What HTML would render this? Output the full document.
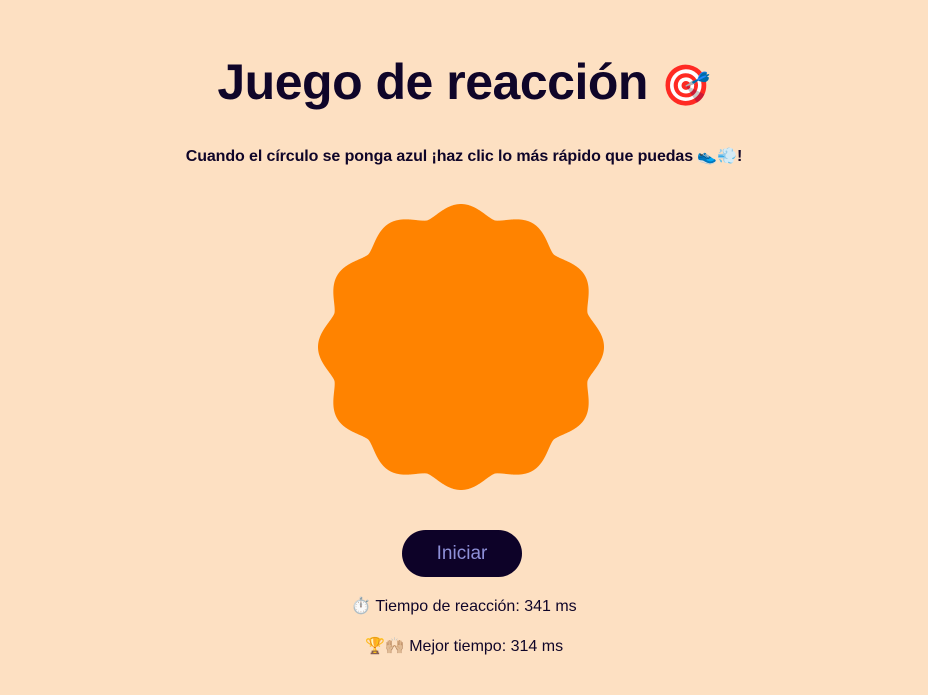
<!DOCTYPE html>
<html><head><meta charset="utf-8"><style>
body{margin:0;width:928px;height:695px;background:#fde0c2;font-family:"Liberation Sans",sans-serif;color:#0f0529;position:relative;overflow:hidden}
.c{position:absolute;left:0;width:928px;text-align:center;white-space:nowrap}
h1{margin:0;font-size:50px;font-weight:bold;top:53px;letter-spacing:-0.5px}
h1 span{font-size:40px}
.sub{top:146px;font-size:16px;font-weight:bold;letter-spacing:-0.1px}
.btn{position:absolute;left:402px;top:530px;width:120px;height:47px;border-radius:24px;background:#0d0228;color:#8e90d8;font-size:19px;line-height:47px;text-align:center}
.t{font-size:16px}
</style></head><body>
<h1 class="c">Juego de reacción <span>🎯</span></h1>
<div class="c sub">Cuando el círculo se ponga azul ¡haz clic lo más rápido que puedas 👟💨!</div>
<svg style="position:absolute;left:0;top:0" width="928" height="695">
<path id="s" fill="#ff8300" d=""/>
</svg>
<script>
var d="";for(var i=0;i<=1440;i++){var t=i/1440*2*Math.PI;var f=(1+Math.cos(12*t))/2;var r=131+12*Math.pow(f,0.75);var x=461+r*Math.cos(t),y=347+r*Math.sin(t);d+=(i?"L":"M")+x.toFixed(2)+" "+y.toFixed(2);}document.getElementById("s").setAttribute("d",d+"Z");
</script>
<div class="btn">Iniciar</div>
<div class="c t" style="top:596px">⏱️ Tiempo de reacción: 341 ms</div>
<div class="c t" style="top:636px">🏆🙌🏼 Mejor tiempo: 314 ms</div>
</body></html>
